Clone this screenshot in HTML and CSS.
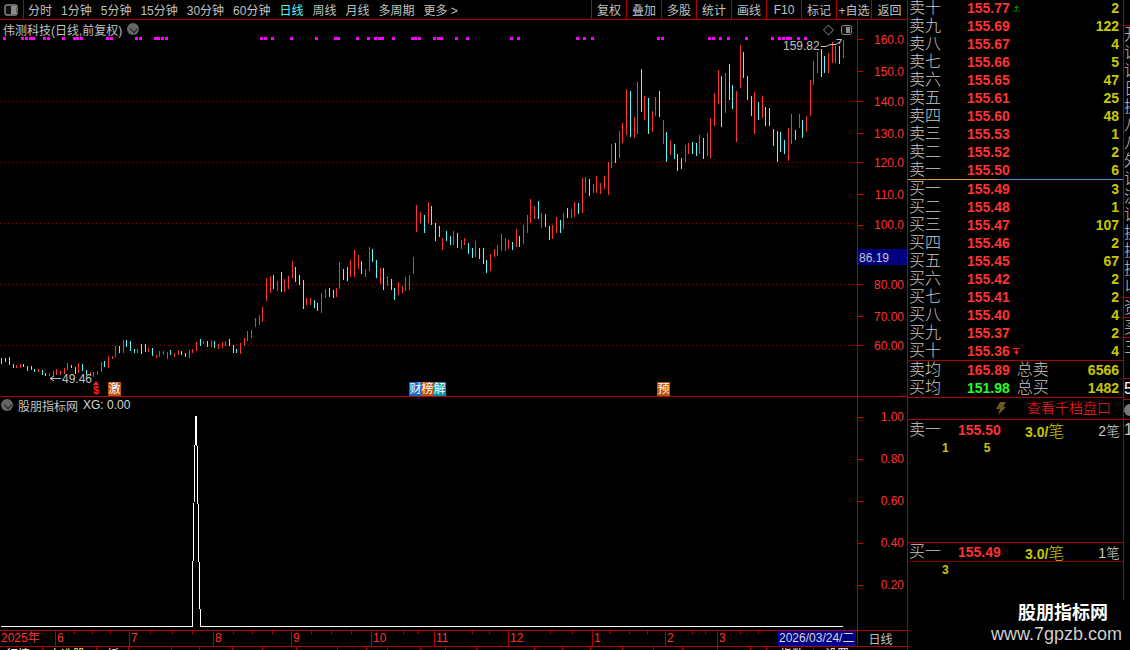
FILE: index.html
```html
<!DOCTYPE html>
<html lang="zh">
<head>
<meta charset="utf-8">
<title>伟测科技 日线</title>
<link rel="stylesheet" href="styles.css">
</head>
<body>
<div class="app">
  <div class="left">
    <div class="toolbar">
      <button class="layout-btn"><svg width="14" height="12" viewBox="0 0 14 12"><rect x="1" y="1" width="12" height="10" rx="2" fill="#111" stroke="#8a8a8a" stroke-width="1.4"/><rect x="7" y="2" width="5" height="8" fill="#8a8a8a"/></svg></button>
      <nav class="periods">
        <span>分时</span><span>1分钟</span><span>5分钟</span><span>15分钟</span><span>30分钟</span><span>60分钟</span><span class="on">日线</span><span>周线</span><span>月线</span><span>多周期</span><span>更多 &gt;</span>
      </nav>
      <nav class="tools">
        <span>复权</span><span>叠加</span><span>多股</span><span>统计</span><span>画线</span><span>F10</span><span>标记</span><span>+自选</span><span>返回</span>
      </nav>
    </div>

    <section class="pane price-pane">
      <div class="plot">
        <svg class="chart" width="857" height="376" viewBox="0 20 857 376">
          <line class="dots" x1="0" y1="101.5" x2="857" y2="101.5"/>
          <line class="dots" x1="0" y1="162.5" x2="857" y2="162.5"/>
          <line class="dots" x1="0" y1="223.5" x2="857" y2="223.5"/>
          <line class="dots" x1="0" y1="284.5" x2="857" y2="284.5"/>
          <line class="dots" x1="0" y1="345.5" x2="857" y2="345.5"/>
          <path class="marks" d="M3 38.5h3M21 38.5h3M25 38.5h3M29 38.5h6M43 38.5h3M47 38.5h3M62 38.5h3M73 38.5h6M80 38.5h3M106 38.5h3M110 38.5h3M135 38.5h3M139 38.5h3M154 38.5h6M161 38.5h3M165 38.5h3M260 38.5h3M264 38.5h3M271 38.5h3M290 38.5h3M315 38.5h3M334 38.5h6M356 38.5h3M367 38.5h3M374 38.5h3M378 38.5h6M392 38.5h3M411 38.5h6M418 38.5h3M433 38.5h3M437 38.5h6M455 38.5h3M466 38.5h3M510 38.5h3M517 38.5h3M576 38.5h3M583 38.5h3M591 38.5h3M657 38.5h3M661 38.5h3M708 38.5h3M712 38.5h3M719 38.5h3M727 38.5h3M745 38.5h3M771 38.5h3M778 38.5h3M782 38.5h3M786 38.5h6M797 38.5h3M804 38.5h3"/>
          <path class="bar-up" d="M16.5 365V368M20.5 364V368M38.5 369V372M49.5 373V376M53.5 371V376M56.5 369V375M60.5 371V375M64.5 368V374M67.5 363V370M78.5 363V373M90.5 372V376M93.5 372V377M97.5 371V375M101.5 362V372M108.5 356V368M112.5 356V359M115.5 346V357M123.5 340V353M137.5 349V353M148.5 348V352M156.5 355V358M159.5 351V357M163.5 351V355M167.5 352V359M174.5 353V357M178.5 350V355M189.5 350V358M192.5 349V353M196.5 342V351M203.5 341V344M211.5 340V347M218.5 344V349M222.5 342V348M225.5 341V346M240.5 343V354M244.5 338V346M247.5 331V341M251.5 330V338M255.5 318V327M259.5 315V325M262.5 307V322M266.5 278V301M270.5 276V293M277.5 281V291M284.5 279V292M288.5 276V289M292.5 261V278M306.5 298V305M310.5 298V305M321.5 293V313M325.5 289V298M336.5 288V297M339.5 262V289M350.5 260V277M354.5 250V277M358.5 255V269M365.5 269V277M369.5 247V271M380.5 268V284M387.5 276V286M398.5 282V295M402.5 286V293M405.5 277V291M409.5 275V290M413.5 257V274M416.5 205V232M420.5 212V223M428.5 202V223M442.5 238V250M453.5 231V245M461.5 240V249M464.5 238V245M475.5 241V257M490.5 254V271M494.5 249V257M497.5 245V256M501.5 234V251M505.5 238V251M508.5 240V249M516.5 229V247M523.5 225V244M527.5 215V233M530.5 199V223M534.5 206V219M541.5 213V228M552.5 225V239M556.5 217V233M563.5 213V229M571.5 209V218M574.5 202V217M582.5 178V213M585.5 177V193M593.5 184V193M596.5 176V193M600.5 183V194M604.5 176V189M608.5 162V195M611.5 144V168M619.5 131V158M622.5 123V143M626.5 89V135M634.5 117V138M637.5 82V134M644.5 96V120M652.5 111V132M655.5 97V116M663.5 120V144M670.5 140V155M685.5 145V162M688.5 143V154M699.5 135V154M707.5 133V156M710.5 118V158M714.5 93V126M718.5 70V104M725.5 73V113M736.5 91V142M740.5 45V88M754.5 92V134M762.5 96V118M788.5 128V161M791.5 114V144M799.5 114V128M806.5 116V132M810.5 80V116M813.5 61V85M817.5 52V73M828.5 53V73M832.5 42V63M835.5 46V63M843.5 40V58"/>
          <path class="bar-down" d="M1.5 358V364M5.5 358V362M9.5 357V365M13.5 364V368M23.5 364V367M27.5 366V371M31.5 366V370M34.5 369V372M42.5 370V375M45.5 373V376M71.5 365V368M75.5 367V374M82.5 364V371M86.5 370V375M104.5 361V367M119.5 346V353M126.5 340V347M130.5 341V351M134.5 349V353M141.5 344V354M145.5 344V352M152.5 348V356M170.5 350V355M181.5 351V355M185.5 353V357M200.5 339V346M207.5 341V347M214.5 341V348M229.5 339V346M233.5 345V353M236.5 349V353M273.5 275V289M281.5 272V292M295.5 267V282M299.5 275V285M303.5 280V309M314.5 300V308M317.5 303V311M329.5 288V297M333.5 290V298M343.5 269V280M347.5 267V281M361.5 261V274M372.5 249V262M376.5 260V278M383.5 268V290M391.5 279V290M394.5 288V300M424.5 215V233M431.5 206V225M435.5 223V241M439.5 226V237M446.5 231V241M450.5 236V245M457.5 233V248M468.5 243V254M472.5 248V258M479.5 248V259M483.5 248V264M486.5 260V273M512.5 242V250M519.5 236V247M538.5 201V219M545.5 214V227M549.5 226V240M560.5 220V233M567.5 208V218M578.5 203V214M589.5 179V196M615.5 143V163M630.5 91V137M641.5 69V112M648.5 98V134M659.5 91V117M666.5 132V162M674.5 144V159M677.5 154V171M681.5 158V169M692.5 142V154M696.5 143V156M703.5 138V159M721.5 76V127M729.5 64V100M732.5 85V109M743.5 52V78M747.5 76V100M751.5 96V116M758.5 102V120M765.5 107V126M769.5 108V126M773.5 129V146M777.5 131V162M780.5 132V152M784.5 140V154M795.5 130V140M802.5 120V138M821.5 49V77M824.5 56V73M839.5 46V64"/>
          <path class="arrow" d="M821 46.5H826L830 44.5H836L841 41M836.5 39.5H841.5L839 44M50 378.5H61M50 378.5L54 376M50 378.5L54 381"/>
          <path class="diamond" d="M828.5 25L833.5 30L828.5 35L823.5 30Z"/>
          <rect class="mini-frame" x="841.5" y="25.5" width="10" height="9" rx="2"/>
          <rect class="mini-fill" x="846" y="27" width="4" height="6"/>
          <text class="mark-label" x="783" y="50">159.82</text>
          <text class="mark-label" x="62" y="383">49.46</text>
        </svg>
        <div class="title"><span>伟测科技(日线,前复权)</span><i class="chev"></i></div>
        <div class="flags">
          <span class="dollar">$</span><b class="flag orange jump">激</b>
          <b class="flag blue cai">财</b><b class="flag orange">榜</b><b class="flag teal">解</b>
          <b class="flag orange yu">预</b>
        </div>
      </div>
      <svg class="axis" width="50" height="376" viewBox="858 20 49 376">
        <path class="tick" d="M858 39.5h5M858 71.5h5M858 101.5h5M858 133.5h5M858 162.5h5M858 194.5h5M858 225.5h5M858 284.5h5M858 316.5h5M858 345.5h5"/>
        <text x="904" y="44">160.0</text><text x="904" y="76">150.0</text><text x="904" y="106">140.0</text><text x="904" y="138">130.0</text><text x="904" y="167">120.0</text><text x="904" y="199">110.0</text><text x="904" y="229">100.0</text><text x="904" y="289">80.00</text><text x="904" y="321">70.00</text><text x="904" y="350">60.00</text>
        <rect class="now-box" x="858" y="249" width="49" height="16"/>
        <text class="now-text" x="859" y="262">86.19</text>
      </svg>
    </section>

    <section class="pane ind-pane">
      <div class="plot">
        <svg class="chart" width="857" height="233" viewBox="0 397 857 233">
          <path class="spike" d="M1 626.5H192.5V590L195.5 417V416.5H196.5L199.5 590L200.5 626.5H843"/>
        </svg>
        <div class="ind-title"><i class="chev"></i><span>股朋指标网</span><span class="xg">XG: 0.00</span></div>
      </div>
      <svg class="axis" width="50" height="233" viewBox="858 397 49 233">
        <path class="tick" d="M858 417.5h5M858 459.5h5M858 501.5h5M858 543.5h5M858 585.5h5"/>
        <text x="904" y="421">1.00</text><text x="904" y="463">0.80</text><text x="904" y="505">0.60</text><text x="904" y="547">0.40</text><text x="904" y="589">0.20</text>
      </svg>
    </section>

    <div class="timebar">
      <div class="months">
        <span>2025年</span><span>6</span><span>7</span><span>8</span><span>9</span><span>10</span><span>11</span><span>12</span><span>1</span><span>2</span><span>3</span>
      </div>
      <svg class="time-ticks" width="778" height="3" viewBox="0 0 778 3"><path d="M74.5 0V3M92.5 0V3M110.5 0V3M150.5 0V3M172.5 0V3M192.5 0V3M233.5 0V3M252.5 0V3M272.5 0V3M311.5 0V3M331.5 0V3M351.5 0V3M403.5 0V3M418.5 0V3M472.5 0V3M489.5 0V3M550.5 0V3M572.5 0V3M610.5 0V3M629.5 0V3M647.5 0V3M692.5 0V3M705.5 0V3M740.5 0V3M758.5 0V3"/></svg>
      <div class="date">2026/03/24/二</div>
      <div class="scale">日线</div>
    </div>

    <div class="tabs">
      <span class="w">行情</span><span class="y">自选股</span><span class="w third">板</span><span></span><span></span><span></span><span></span><span></span><span></span><span></span><span></span><span></span><span></span><span></span><span></span><span></span><span></span><span></span><span></span><span></span><span></span><span></span><span></span><span class="w idx">指数</span><span class="w cfg">设置</span>
    </div>
  </div>

  <aside class="book">
    <div class="levels">
      <div class="row"><span class="lab">卖十</span><b class="px">155.77</b><svg class="mini" width="7" height="7" viewBox="0 0 7 7"><path class="mini-up" d="M3.5 0L6 3H1ZM3 3h1v2H3ZM0 5.5h7v1H0Z"/></svg><b class="vol">2</b></div>
      <div class="row"><span class="lab">卖九</span><b class="px">155.69</b><b class="vol">122</b></div>
      <div class="row"><span class="lab">卖八</span><b class="px">155.67</b><b class="vol">4</b></div>
      <div class="row"><span class="lab">卖七</span><b class="px">155.66</b><b class="vol">5</b></div>
      <div class="row"><span class="lab">卖六</span><b class="px">155.65</b><b class="vol">47</b></div>
      <div class="row"><span class="lab">卖五</span><b class="px">155.61</b><b class="vol">25</b></div>
      <div class="row"><span class="lab">卖四</span><b class="px">155.60</b><b class="vol">48</b></div>
      <div class="row"><span class="lab">卖三</span><b class="px">155.53</b><b class="vol">1</b></div>
      <div class="row"><span class="lab">卖二</span><b class="px">155.52</b><b class="vol">2</b></div>
      <div class="row"><span class="lab">卖一</span><b class="px">155.50</b><b class="vol">6</b></div>
    </div>
    <div class="split"></div>
    <div class="levels">
      <div class="row"><span class="lab">买一</span><b class="px">155.49</b><b class="vol">3</b></div>
      <div class="row"><span class="lab">买二</span><b class="px">155.48</b><b class="vol">1</b></div>
      <div class="row"><span class="lab">买三</span><b class="px">155.47</b><b class="vol">107</b></div>
      <div class="row"><span class="lab">买四</span><b class="px">155.46</b><b class="vol">2</b></div>
      <div class="row"><span class="lab">买五</span><b class="px">155.45</b><b class="vol">67</b></div>
      <div class="row"><span class="lab">买六</span><b class="px">155.42</b><b class="vol">2</b></div>
      <div class="row"><span class="lab">买七</span><b class="px">155.41</b><b class="vol">2</b></div>
      <div class="row"><span class="lab">买八</span><b class="px">155.40</b><b class="vol">4</b></div>
      <div class="row"><span class="lab">买九</span><b class="px">155.37</b><b class="vol">2</b></div>
      <div class="row"><span class="lab">买十</span><b class="px">155.36</b><svg class="mini" width="7" height="7" viewBox="0 0 7 7"><path class="mini-down" d="M0 0h7v1H0ZM3 1.5h1v2H3ZM1 3.5h5L3.5 7Z"/></svg><b class="vol">4</b></div>
    </div>
    <div class="totals">
      <div class="row"><span class="lab">卖均</span><b class="px">165.89</b><span class="lab sum">总卖</span><b class="vol">6566</b></div>
      <div class="row"><span class="lab">买均</span><b class="px green">151.98</b><span class="lab sum">总买</span><b class="vol">1482</b></div>
    </div>
    <div class="depth-link">
      <svg width="12" height="13" viewBox="0 0 12 13"><path class="bolt" d="M5 0H11L8 5H11L3 13L5 7H1Z"/></svg>
      <span>查看千档盘口</span>
    </div>
    <div class="queue sell">
      <div class="q-head"><span class="lab">卖一</span><b class="q-px">155.50</b><b class="q-avg">3.0/<span>笔</span></b><span class="q-num">2笔</span></div>
      <div class="q-orders"><b>1</b><b>5</b></div>
    </div>
    <div class="queue buy">
      <div class="q-head dotted"><span class="lab">买一</span><b class="q-px">155.49</b><b class="q-avg">3.0/<span>笔</span></b><span class="q-num">1笔</span></div>
      <div class="q-orders"><b>3</b></div>
    </div>
  </aside>

  <div class="edge">
    <div class="edge-list"><span>开</span><span>证</span><span>证</span><span>日</span><span>换</span><span>八</span><span>八</span><span>外</span><span>证</span><span>流</span><span>证</span><span>换</span><span>换</span><span>换</span><span>以</span></div>
    <div class="edge-cell">资</div>
    <div class="edge-cell">买</div>
    <div class="edge-cell tall">三</div>
    <div class="edge-cell num">5</div>
    <div class="edge-cell"><i class="edge-dot"></i></div>
    <div class="edge-cell">1</div>
  </div>

  <div class="stamp"><strong>股朋指标网</strong><span>www.7gpzb.com</span></div>
</div>
</body>
</html>
```
FILE: styles.css
```css
* { box-sizing: border-box; }
html, body { margin: 0; height: 100%; background: #000; }
body { font-family: "Liberation Sans", "Noto Sans CJK SC", sans-serif; color: #c0c0c0; }

.app { position: relative; display: flex; width: 1130px; height: 650px; overflow: hidden; background: #000; }

/* left column */
.left { display: flex; flex-direction: column; width: 908px; height: 650px; border-right: 1px solid #b00000; }

.toolbar { display: flex; align-items: center; flex: none; height: 20px; border-bottom: 1px solid #b00000; font-size: 12px; }
.layout-btn { display: flex; align-items: center; justify-content: center; width: 24px; height: 19px; padding: 0 1px 0 0; background: none; border: 0; border-right: 1px solid #b00000; }
.periods { display: flex; gap: 9px; margin-left: 4px; white-space: nowrap; }
.periods .on { color: #54fcfc; }
.tools { display: flex; margin-left: auto; height: 19px; }
.tools span { display: flex; align-items: center; justify-content: center; width: 35px; border-left: 1px solid #b00000; white-space: nowrap; }
.tools span:last-child { width: 36px; }

.pane { display: flex; flex: none; }
.price-pane { height: 377px; border-bottom: 1px solid #b00000; }
.ind-pane { height: 233px; }
.plot { position: relative; width: 857px; flex: none; }
.chart { display: block; }
.axis { display: block; flex: none; width: 50px; border-left: 1px solid #b00000; overflow: hidden; }
.axis text { fill: #ff3232; font-size: 12px; text-anchor: end; }
.axis .tick { stroke: #d00000; stroke-width: 1; fill: none; }
.axis .now-box { fill: #000080; }
.axis .now-text { fill: #c8c8c8; text-anchor: start; }

.dots { stroke: #8c0000; stroke-width: 1; stroke-dasharray: 1 3; }
.marks { stroke: #ff00ff; stroke-width: 3; fill: none; shape-rendering: crispEdges; }
.bar-up { stroke: #ff3232; stroke-width: 1; fill: none; shape-rendering: crispEdges; }
.bar-down { stroke: #54fcfc; stroke-width: 1; fill: none; shape-rendering: crispEdges; }
.arrow { stroke: #c0c0c0; stroke-width: 1; fill: none; }
.diamond { stroke: #8a8a8a; stroke-width: 1; fill: none; }
.mini-frame { stroke: #8a8a8a; fill: #111; }
.mini-fill { fill: #8a8a8a; }
.mark-label { fill: #c0c0c0; font-size: 12px; }
.spike { stroke: #fff; stroke-width: 1; fill: none; shape-rendering: crispEdges; }

.title { position: absolute; left: 3px; top: 0; display: flex; align-items: center; gap: 5px; height: 18px; font-size: 12px; white-space: nowrap; }
.chev { position: relative; display: block; flex: none; width: 12px; height: 12px; border-radius: 50%; background: #666; }
.chev::after { content: ""; position: absolute; left: 3.5px; top: 2.5px; width: 5px; height: 5px; border-right: 1px solid #222; border-bottom: 1px solid #222; transform: rotate(45deg); }

.flags { position: absolute; left: 0; bottom: 0; width: 857px; height: 15px; }
.flag { position: absolute; top: 1px; width: 13px; height: 14px; font-size: 12px; line-height: 14px; font-weight: 400; text-align: center; color: #fff; }
.orange { background: #c0500f; }
.blue { background: #1769c4; }
.teal { background: #0a8fa8; }
.dollar { position: absolute; left: 93px; top: 4px; color: #ff2020; font-size: 11px; font-weight: 700; line-height: 11px; }
.dollar::before { content: ""; position: absolute; left: 0; top: -4px; border: 3px solid transparent; border-top: 0; border-bottom: 4px solid #ff2020; }
.jump { left: 108px; }
.cai { left: 409px; }
.cai + .flag { left: 421px; }
.cai + .flag + .flag { left: 433px; }
.yu { left: 657px; }

.ind-title { position: absolute; left: 1px; top: 0; display: flex; align-items: center; gap: 5px; height: 16px; font-size: 12px; white-space: nowrap; }
.xg { color: #d8d8d8; }

/* time axis */
.timebar { position: relative; display: flex; flex: none; height: 17px; border-top: 1px solid #b00000; border-bottom: 1px solid #b00000; }
.months { display: grid; grid-template-columns: 55px 74px 84px 78px 80px 63px 74px 84px 73px 52px 61px; width: 778px; font-size: 12px; line-height: 15px; color: #ff3232; }
.months span { padding-left: 1px; border-left: 1px solid #b00000; }
.months span:first-child { border-left: 0; }
.time-ticks { position: absolute; left: 0; top: 0; }
.time-ticks path { stroke: #b00000; fill: none; }
.date { flex: none; width: 78px; height: 15px; background: #000080; border: 1px solid #0000b0; font-size: 12px; line-height: 13px; color: #d8d8d8; white-space: nowrap; overflow: hidden; }
.scale { display: flex; align-items: center; justify-content: center; flex: none; width: 50px; margin-left: 1px; padding-right: 4px; border-left: 1px solid #b00000; font-size: 12px; }

.tabs { display: grid; grid-template-columns: 43px 54px 32px 43px 28px 33px 30px 34px 41px 29px 21px 33px 25px 31px 58px 28px 28px 32px 31px 29px 35px 33px 16px 47px 42px; height: 3px; overflow: hidden; font-size: 12px; line-height: 16px; }
.tabs span { padding-left: 6px; border-right: 1px solid #b00000; overflow: hidden; white-space: nowrap; }
.tabs .w { color: #fff; }
.tabs .y { color: #ffff54; }
.tabs .third { padding-left: 10px; }
.tabs .idx { padding-left: 13px; }
.tabs .cfg { padding-left: 11px; border-right: 0; }

/* order book */
.book { flex: none; width: 216px; height: 600px; border-right: 1px solid #b00000; }
.levels { margin-top: -1px; }
.split + .levels { margin-top: 0; }
.split { height: 1px; background: linear-gradient(90deg, #e0a040 0 90px, #5090d0 90px); }
.row { display: flex; align-items: center; height: 18px; padding: 0 4px 0 1px; }
.lab { flex: none; width: 58px; font-size: 16px; font-weight: 300; line-height: 18px; color: #c8c8c8; white-space: nowrap; }
.px { font-size: 14px; color: #ff3232; line-height: 18px; }
.px.green { color: #20ff20; }
.mini { margin-left: 3px; }
.mini-up { fill: #008000; }
.mini-down { fill: #ff2020; }
.vol { margin-left: auto; font-size: 14px; line-height: 18px; color: #c8c800; }
.sum { width: auto; margin-left: 7px; }

.totals { height: 38px; border-top: 1px solid #b00000; border-bottom: 1px solid #b00000; }
.depth-link { display: flex; align-items: center; height: 22px; padding-left: 87px; gap: 20px; border-bottom: 1px solid #b00000; font-size: 14px; line-height: 21px; font-weight: 300; color: #ff2020; }
.bolt { fill: #6a5a20; }

.queue.sell { height: 123px; border-bottom: 1px solid #b00000; }
.q-head { display: flex; align-items: center; height: 20px; padding-left: 1px; }
.q-head.dotted { height: 19px; border-bottom: 1px dotted #a00000; }
.q-head .lab { width: 49px; }
.q-px { flex: none; width: 67px; font-size: 14px; color: #ff3232; }
.q-avg { flex: none; font-size: 14px; color: #c8c800; white-space: nowrap; }
.q-avg span { font-size: 16px; font-weight: 300; }
.q-num { margin-left: auto; padding-right: 3px; font-size: 14px; font-weight: 300; color: #c8c8c8; white-space: nowrap; }
.q-orders { display: flex; gap: 35px; padding-left: 34px; height: 18px; font-size: 12px; line-height: 17px; color: #c8c800; }

/* clipped neighbouring panel */
.edge { flex: none; width: 6px; height: 600px; padding-top: 25px; overflow: hidden; font-size: 16px; font-weight: 300; color: #c8c8c8; }
.edge-list { display: flex; flex-direction: column; height: 272px; border-top: 1px solid #b00000; }
.edge-list span { height: 18px; line-height: 18px; flex: none; }
.edge-cell { height: 20px; line-height: 19px; border-top: 1px solid #b00000; }
.edge-cell.tall { height: 41px; }
.edge-cell.num { color: #fff; height: 21px; }
.edge-dot { display: block; width: 12px; height: 12px; margin-top: 4px; border-radius: 50%; background: #777; }

.stamp { position: absolute; left: 991px; top: 601px; display: flex; flex-direction: column; width: 132px; }
.stamp strong { margin-left: 27px; font-size: 18px; line-height: 24px; color: #fff; }
.stamp span { margin-top: -2px; font-size: 18px; line-height: 22px; color: #cfcfcf; white-space: nowrap; }
```
